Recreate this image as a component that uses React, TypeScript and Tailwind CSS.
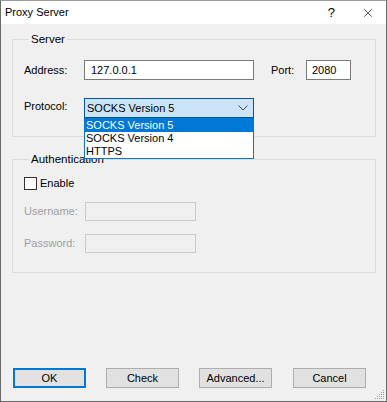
import { X } from 'lucide-react';

const font = "font-['Liberation_Sans',Arial,sans-serif]";

function GroupBox({ title, className, children }: { title: string; className?: string; children: React.ReactNode }) {
  return (
    <fieldset className={`border border-[#dcdcdc] ${className ?? ''}`}>
      <legend className="ml-[5px] px-[2px] leading-[13px] text-[11.5px]">{title}</legend>
      {children}
    </fieldset>
  );
}

function Button({ label, focused }: { label: string; focused?: boolean }) {
  return (
    <button
      className={`w-[73px] h-[20px] bg-[#e1e1e1] flex items-center justify-center leading-none ${
        focused ? 'border-2 border-[#0078d7]' : 'border border-[#adadad]'
      }`}
    >
      {label}
    </button>
  );
}

export default function App() {
  return (
    <div className={`w-[387px] h-[402px] flex flex-col border border-[#6b6b6b] border-t-[#9a9a9a] text-[11px] text-black ${font}`}>
      {/* Title bar */}
      <div className="h-[23px] bg-white flex items-center shrink-0">
        <span className="pl-[4px] text-[11px]">Proxy Server</span>
        <span className="ml-auto text-[13px] pr-[26px] leading-none">?</span>
        <X className="w-[14px] h-[14px] mr-[11px] text-black" strokeWidth={1.1} />
      </div>

      {/* Body */}
      <div className="flex-1 bg-[#f0f0f0] flex flex-col">
        <div className="pl-[11px] pr-[10px] pt-[9px]">
          <GroupBox title="Server" className="pt-[14px] pb-[18px] pl-[11px]">
            <div className="flex items-center h-[20px]">
              <span className="w-[60px]">Address:</span>
              <div className="w-[170px] h-[20px] bg-white border border-[#7a7a7a] flex items-center pl-[6px]">127.0.0.1</div>
              <span className="ml-[17px] w-[35px]">Port:</span>
              <div className="w-[45px] h-[20px] bg-white border border-[#7a7a7a] flex items-center pl-[5px]">2080</div>
            </div>
            <div className="flex items-center h-[20px] mt-[18px]">
              <span className="w-[60px] -mt-[4px]">Protocol:</span>
              <div className="relative w-[170px] h-[20px]">
                <div className="h-full bg-[#cce4f7] border border-[#005499] flex items-center pl-[2px] pr-[5px]">
                  <span>SOCKS Version 5</span>
                  <svg className="ml-auto" width="10" height="6" viewBox="0 0 10 6">
                    <polyline points="0.5,0.5 5,5 9.5,0.5" fill="none" stroke="#444" strokeWidth="1" />
                  </svg>
                </div>
                {/* open dropdown list */}
                <div className="absolute left-0 top-full w-[170px] bg-white border border-t-0 border-[#0078d7] z-10 leading-[13px]">
                  <div className="bg-[#0078d7] text-white pl-[1px] h-[14px] flex items-center">SOCKS Version 5</div>
                  <div className="pl-[1px] h-[13px] flex items-center">SOCKS Version 4</div>
                  <div className="pl-[1px] h-[13px] flex items-center">HTTPS</div>
                </div>
              </div>
            </div>
          </GroupBox>

          <GroupBox title="Authentication" className="mt-[16px] pt-[11px] pb-[19px] pl-[11px]">
            <div className="flex items-center h-[13px]">
              <div className="w-[13px] h-[13px] bg-white border border-[#333]" />
              <span className="ml-[3px]">Enable</span>
            </div>
            <div className="flex items-center h-[19px] mt-[12px] text-[#a0a0a0]">
              <span className="w-[61px]">Username:</span>
              <div className="w-[111px] h-[19px] bg-[#f0f0f0] border border-[#cccccc]" />
            </div>
            <div className="flex items-center h-[19px] mt-[13px] text-[#a0a0a0]">
              <span className="w-[61px]">Password:</span>
              <div className="w-[111px] h-[19px] bg-[#f0f0f0] border border-[#cccccc]" />
            </div>
          </GroupBox>
        </div>

        <div className="mt-auto flex items-end">
          <div className="flex gap-[20px] pl-[12px] pb-[13px]">
            <Button label="OK" focused />
            <Button label="Check" />
            <Button label="Advanced..." />
            <div className="ml-[1px]">
              <Button label="Cancel" />
            </div>
          </div>
          <svg className="ml-auto mb-[1px] mr-[1px]" width="10" height="10" viewBox="0 0 10 10">
            <g fill="#9a9a9a">
              <rect x="8" y="0" width="1" height="1" />
              <rect x="6" y="2" width="1" height="1" />
              <rect x="8" y="2" width="1" height="1" />
              <rect x="4" y="4" width="1" height="1" />
              <rect x="6" y="4" width="1" height="1" />
              <rect x="8" y="4" width="1" height="1" />
              <rect x="2" y="6" width="1" height="1" />
              <rect x="4" y="6" width="1" height="1" />
              <rect x="6" y="6" width="1" height="1" />
              <rect x="8" y="6" width="1" height="1" />
              <rect x="0" y="8" width="1" height="1" />
              <rect x="2" y="8" width="1" height="1" />
              <rect x="4" y="8" width="1" height="1" />
              <rect x="6" y="8" width="1" height="1" />
              <rect x="8" y="8" width="1" height="1" />
            </g>
          </svg>
        </div>
      </div>
    </div>
  );
}
